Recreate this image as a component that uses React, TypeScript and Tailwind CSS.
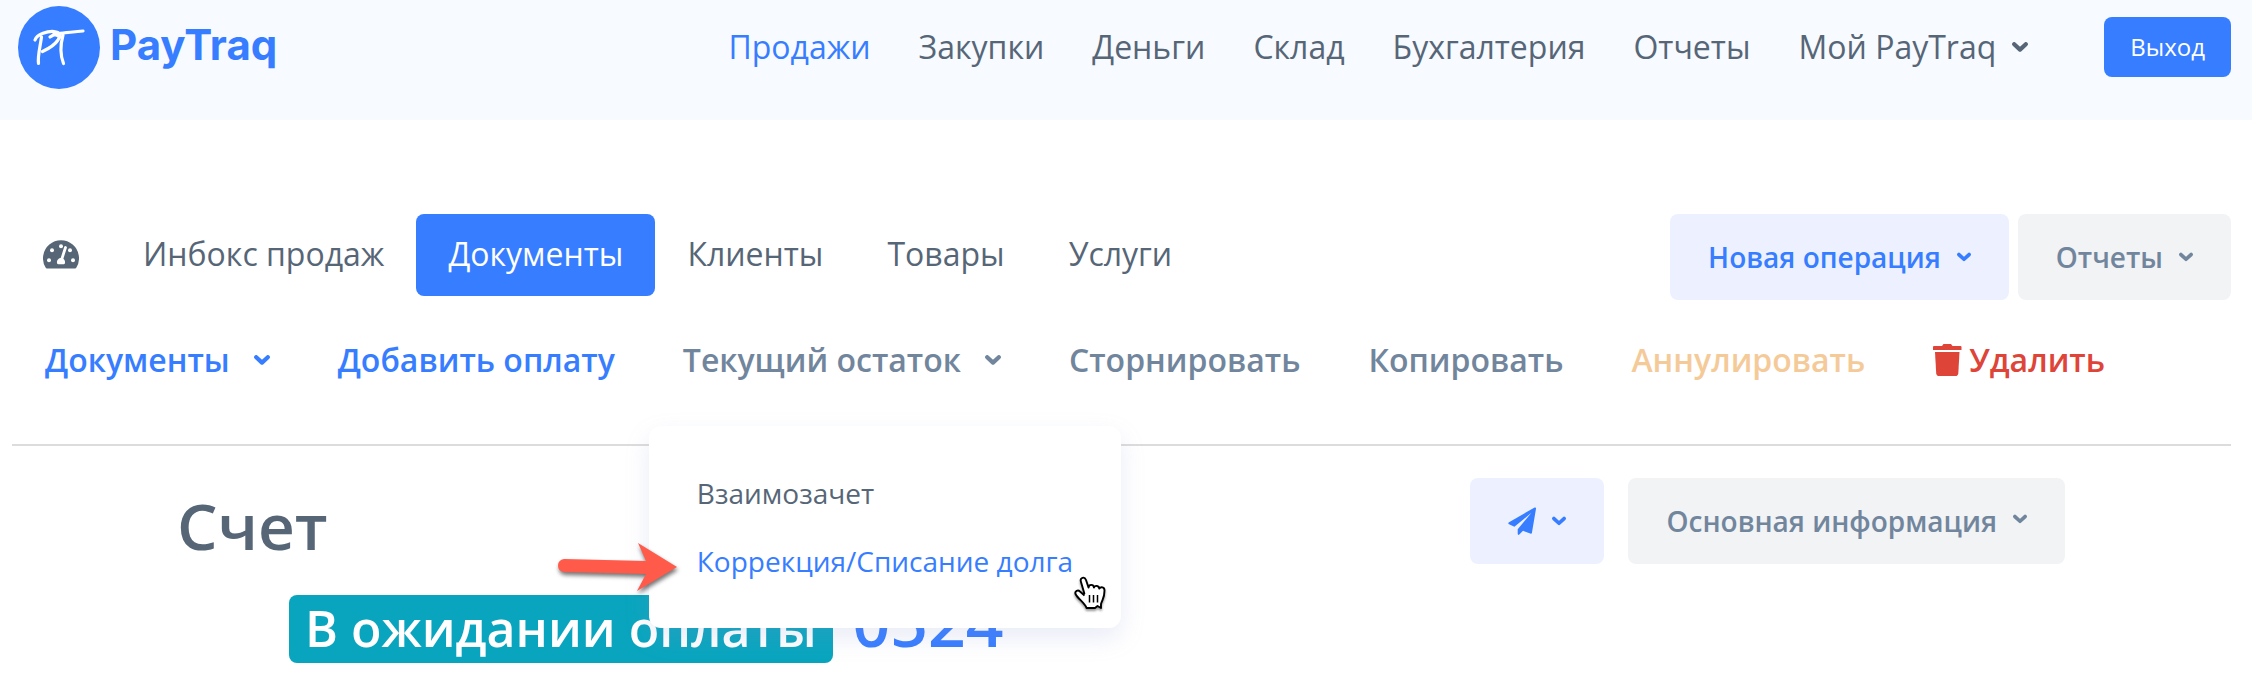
import type { ReactNode } from 'react';

const mainNav = ['Закупки', 'Деньги', 'Склад', 'Бухгалтерия', 'Отчеты'];

const tabs = [
  { label: 'Инбокс продаж', active: false },
  { label: 'Документы', active: true },
  { label: 'Клиенты', active: false },
  { label: 'Товары', active: false },
  { label: 'Услуги', active: false },
];

function Chevron({ className = 'w-4' }: { className?: string }) {
  return (
    <svg viewBox="0 0 16 10" className={`h-[10px] shrink-0 ${className}`} fill="none" aria-hidden="true">
      <path d="M2.2 2.2 L8 7.6 L13.8 2.2" stroke="currentColor" strokeWidth="4.2" strokeLinecap="round" strokeLinejoin="round" />
    </svg>
  );
}

function Logo() {
  return (
    <a href="#" className="flex items-center gap-2.5 text-[#377dff]">
      <svg viewBox="0 0 82 83" className="w-[82px] h-[83px]" aria-hidden="true">
        <ellipse cx="41" cy="41.5" rx="41" ry="41.5" fill="currentColor" />
        <g fill="none" stroke="#fff" strokeWidth="3.2" strokeLinecap="round" strokeLinejoin="round">
          <path d="M23.5 31 C22 42 19.500 50 20.500 57.500" />
          <path d="M17 34 C19 28 30 25 36 25.500 C42 26 43 29 40 34 C36 40 30 43 24.500 45.500" />
          <path d="M32 31 C38 26 50 27 65 25" />
          <path d="M36 28 L43 31" />
          <path d="M45 29 C42 40 42.500 50 45.500 57.500" />
        </g>
      </svg>
      <span className="pb-1.5 font-['Inter',sans-serif] text-[42px] leading-none font-bold">PayTraq</span>
    </a>
  );
}

function GaugeIcon() {
  return (
    <svg viewBox="0 0 36 29" className="w-9 h-[29px]" aria-hidden="true">
      <path d="M2.600 27.600 A18 18 0 1 1 33.400 27.600 Q33 28.500 32 28.500 H4 Q3 28.500 2.600 27.600Z" fill="currentColor" />
      <g fill="#fff">
        <circle cx="6" cy="20.200" r="2" />
        <circle cx="9" cy="10.300" r="2" />
        <circle cx="18" cy="6.200" r="2" />
        <circle cx="27" cy="10.300" r="2" />
        <circle cx="30" cy="20.200" r="2" />
        <path d="M14 23 C13.500 20 16 18 18 18 C20.500 18 22.500 20.500 22 23 Q21.800 24.300 20.500 24.300 H15.500 Q14.200 24.300 14 23Z" />
      </g>
      <path d="M18.500 20 L22.500 7.500" stroke="#fff" strokeWidth="2.800" strokeLinecap="round" />
    </svg>
  );
}

function TrashIcon() {
  return (
    <svg viewBox="0 0 30 32" className="w-[30px] h-8" fill="currentColor" aria-hidden="true">
      <path d="M1 2 H9 L10.500 0 H18 L19.500 2 H27.500 Q28.500 2 28.500 3 V6 H0 V3 Q0 2 1 2Z" />
      <path d="M2 8 H26.500 L25.300 29.200 Q25 32 22.500 32 H6 Q3.500 32 3.200 29.200Z" />
    </svg>
  );
}

function PlaneIcon() {
  return (
    <svg viewBox="0 0 28 28" className="w-7 h-7" fill="currentColor" aria-hidden="true">
      <path d="M26.600 0.500 Q28.200 0 28 1.700 L23.900 26 Q23.600 27.200 22.300 26.600 L15 23.800 L11.300 27.600 Q9.800 28.500 9.700 26.800 V22.300 L23.400 5.800 L6.400 19.800 L1 17.300 Q-0.500 16.300 1 15.200Z" />
    </svg>
  );
}

function Arrow() {
  return (
    <svg viewBox="0 0 124 56" className="w-[124px] h-14 drop-shadow-[1px_3px_2px_rgba(0,0,0,0.55)]" aria-hidden="true">
      <path d="M8 17 L90 19 L82 1 L121 25 L81 49 L90 32 L8 30 Q2 29 2 23.500 Q2 18 8 17Z" fill="#ff5a4a" />
    </svg>
  );
}

function HandCursor() {
  return (
    <svg viewBox="0 0 32 34" className="w-8 h-[34px] drop-shadow-[0_2px_1px_rgba(0,0,0,0.4)]" aria-hidden="true">
      <path
        d="M10.500 18 L7 6 C5.500 1.500 10.500 0 12 4 L14.500 11.500 C15 8 19.500 8 20 11.500 C21 9 25 9.500 25.200 12.500 C27 10.500 30.500 11 30.500 14.500 C30.500 22 28.500 23 27 28 V32 L23.500 30 L21 32 H12.500 C11 27 4 23 1.500 18 C0.500 15 4 13.500 6 15.500 L10.500 19.500"
        fill="#fff"
        stroke="#000"
        strokeWidth="1.900"
        strokeLinejoin="round"
      />
      <path d="M15.500 19 V26.500 M19.500 19 V26.500 M23.500 19 V26.500" stroke="#000" strokeWidth="1.500" />
    </svg>
  );
}

function SoftButton({ tone, label, children }: { tone: 'blue' | 'gray'; label?: string; children: ReactNode }) {
  return (
    <button
      aria-label={label}
      className={`flex items-center gap-4 h-[86px] px-[38px] rounded-lg text-[28px] font-semibold ${
        tone === 'blue' ? 'bg-[#edf1ff] text-[#377dff]' : 'bg-[#f1f3f5] text-[#71869d]'
      }`}
    >
      {children}
    </button>
  );
}

export default function App() {
  return (
    <div className="bg-white font-['Open_Sans','Noto_Sans',sans-serif] text-[#566677] whitespace-nowrap">
      {/* Header */}
      <header className="flex items-start justify-between h-[120px] bg-[#f7faff] pt-[6px] pl-[18px] pr-[21px]">
        <Logo />
        <div className="flex items-center pt-[11px]">
          <nav className="flex items-center gap-12 text-[32px] leading-[60px]">
            <a href="#" className="text-[#377dff]">Продажи</a>
            {mainNav.map((item) => (
              <a key={item} href="#">{item}</a>
            ))}
            <button className="flex items-center gap-4">
              Мой PayTraq
              <Chevron />
            </button>
          </nav>
          <button className="ml-[76px] h-[60px] px-[26px] rounded-lg bg-[#377dff] text-white text-2xl">Выход</button>
        </div>
      </header>

      {/* Section tabs */}
      <div className="flex items-start justify-between pt-[94px] pl-[11px] pr-[21px]">
        <nav className="flex text-[32px] leading-[80px]">
          <a href="#" aria-label="Обзор" className="flex items-center px-8 pb-0.5">
            <GaugeIcon />
          </a>
          {tabs.map((tab) => (
            <a
              key={tab.label}
              href="#"
              className={`px-8 pb-0.5 rounded-lg ${tab.active ? 'bg-[#377dff] text-white' : ''}`}
            >
              {tab.label}
            </a>
          ))}
        </nav>
        <div className="flex gap-[9px]">
          <SoftButton tone="blue">
            Новая операция
            <Chevron className="w-[14px]" />
          </SoftButton>
          <SoftButton tone="gray">
            Отчеты
            <Chevron className="w-[14px]" />
          </SoftButton>
        </div>
      </div>

      {/* Document actions */}
      <div className="flex items-center gap-[68px] mt-9 px-[45px] text-[32px] leading-[48px] font-semibold text-[#71869d]">
        <button className="flex items-center gap-6 text-[#377dff]">
          Документы
          <Chevron />
        </button>
        <a href="#" className="text-[#377dff]">Добавить оплату</a>
        <div className="relative">
          <button className="flex items-center gap-6">
            Текущий остаток
            <Chevron />
          </button>
          <div className="absolute z-10 top-[90px] -left-[34px] flex flex-col w-[472px] py-[33px] px-12 rounded-xl bg-white text-[28px] leading-[68px] font-normal text-[#566677] shadow-[0_10px_24px_rgba(140,152,210,0.18)]">
            <a href="#">Взаимозачет</a>
            <a href="#" className="text-[#377dff]">Коррекция/Списание долга</a>
            <div className="absolute -left-[93px] top-[116px]">
              <Arrow />
            </div>
            <div className="absolute right-[15px] bottom-[18px]">
              <HandCursor />
            </div>
          </div>
        </div>
        <a href="#">Сторнировать</a>
        <a href="#">Копировать</a>
        <a href="#" className="text-[#f5ca99]">Аннулировать</a>
        <button className="flex items-center gap-1.5 text-[#de4437]">
          <TrashIcon />
          Удалить
        </button>
      </div>

      <hr className="mt-[60px] ml-3 mr-[21px] border-t-2 border-[#dcdcdc]" />

      {/* Document title */}
      <main className="flex items-start justify-between pt-8 pl-[177px] pr-[187px]">
        <div>
          <h1 className="text-[64px] leading-[96px] font-semibold">Счет</h1>
          <div className="flex items-baseline gap-5 pl-28 mt-5 font-semibold">
            <span className="px-4 pb-0.5 rounded-lg bg-[#09a5be] text-white text-[50px] leading-[66px]">
              В ожидании оплаты
            </span>
            <span className="text-[66px] leading-[54px] text-[#377dff]">0524</span>
          </div>
        </div>
        <div className="flex gap-6">
          <SoftButton tone="blue" label="Отправить">
            <PlaneIcon />
            <Chevron className="w-[14px]" />
          </SoftButton>
          <SoftButton tone="gray">
            Основная информация
            <Chevron className="w-[14px] mb-1" />
          </SoftButton>
        </div>
      </main>
    </div>
  );
}
